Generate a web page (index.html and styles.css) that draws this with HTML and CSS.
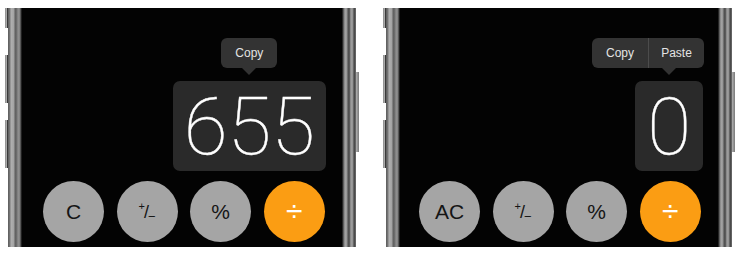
FILE: index.html
```html
<!DOCTYPE html>
<html>
<head>
<meta charset="utf-8">
<link rel="stylesheet" href="styles.css">
</head>
<body>
<div class="stage">
  <div class="phone phone-a">
    <span class="side side-l s1"></span>
    <span class="side side-l s2"></span>
    <span class="side side-l s3"></span>
    <span class="side side-r s4"></span>
    <div class="screen screen-a">
      <div class="display-row">
        <div class="display display-a">
          <div class="menu menu-a"><span class="menu-item">Copy</span></div>
          <span class="arrow"></span>
          <span class="value">655</span>
        </div>
      </div>
      <div class="keys">
        <div class="key gray">C</div>
        <div class="key gray"><span class="pm"><span class="pm-plus">+</span><span class="pm-slash">/</span><span class="pm-minus">−</span></span></div>
        <div class="key gray">%</div>
        <div class="key orange"><span class="div">÷</span></div>
      </div>
    </div>
  </div>
  <div class="phone phone-b">
    <span class="side side-l s1"></span>
    <span class="side side-l s2"></span>
    <span class="side side-l s3"></span>
    <span class="side side-r s4"></span>
    <div class="screen screen-b">
      <div class="display-row">
        <div class="display display-b">
          <div class="menu menu-b"><span class="menu-item">Copy</span><span class="menu-item sep">Paste</span></div>
          <span class="arrow"></span>
          <span class="value">0</span>
        </div>
      </div>
      <div class="keys">
        <div class="key gray">AC</div>
        <div class="key gray"><span class="pm"><span class="pm-plus">+</span><span class="pm-slash">/</span><span class="pm-minus">−</span></span></div>
        <div class="key gray">%</div>
        <div class="key orange"><span class="div">÷</span></div>
      </div>
    </div>
  </div>
</div>
</body>
</html>
```
FILE: styles.css
```css
* { box-sizing: border-box; }
html, body { margin: 0; padding: 0; background: #fff; }
body { width: 740px; height: 253px; overflow: hidden; }

.stage {
  display: flex;
  gap: 30px;
  padding: 8px 0 0 8px;
}

.phone {
  position: relative;
  height: 239px;
  padding: 0 14px;
  background:
    linear-gradient(to right,
      #5a5a5a 0, #7a7a7a 2px, #b0b0b0 3px, #a2a2a2 6px, #5e5e5e 7px, #707070 9px,
      #929292 10px, #808080 12px, #2e2e2e 13px, #111 14px,
      #111 calc(100% - 14px), #3a3a3a calc(100% - 13px), #828282 calc(100% - 12px),
      #acacac calc(100% - 10px), #5e5e5e calc(100% - 8px), #444 calc(100% - 7px),
      #a0a0a0 calc(100% - 5px), #909090 calc(100% - 3px), #3e3e3e calc(100% - 2px), #707070 100%);
}
.phone-a { width: 348px; }
.phone-b { width: 346px; }

.side {
  position: absolute;
  width: 3px;
  background: linear-gradient(to right, #8a8a8a, #b5b5b5);
}
.side-l { left: -3px; border-right: 1px solid #3a3a3a; }
.side-r { right: -3px; background: linear-gradient(to right, #b0b0b0, #7a7a7a); }
.s1 { top: 0; height: 20px; }
.s2 { top: 47px; height: 48px; }
.s3 { top: 112px; height: 48px; }
.s4 { top: 64px; height: 80px; }

.screen {
  height: 100%;
  background: #030303;
  display: flex;
  flex-direction: column;
  justify-content: flex-end;
  padding-bottom: 5px;
}
.screen-a { padding-left: 21px; padding-right: 16px; }
.screen-b { padding-left: 19px; padding-right: 15px; }

.display-row {
  display: flex;
  justify-content: flex-end;
  margin-bottom: 10px;
}

.display {
  position: relative;
  height: 90px;
  padding: 2px 11px 0;
  background: #2a2a2a;
  border-radius: 7px;
}
.display-b { padding: 2px 12px 0; }
.value {
  display: block;
  font-family: Roboto, "Liberation Sans", sans-serif;
  font-weight: 100;
  font-size: 80px;
  line-height: 88px;
  color: #fff;
  -webkit-text-stroke: 0.4px #fff;
}

.arrow {
  position: absolute;
  left: 50%;
  top: -13px;
  margin-left: -7px;
  width: 0;
  height: 0;
  border-left: 7px solid transparent;
  border-right: 7px solid transparent;
  border-top: 7px solid #333;
}

.menu {
  position: absolute;
  bottom: calc(100% + 13px);
  height: 30px;
  display: flex;
  background: #333;
  border-radius: 6px;
  font-family: "Liberation Sans", Arial, sans-serif;
  font-size: 12px;
  color: #e4e4e4;
}
.menu-a { left: 50%; transform: translateX(-50%); }
.menu-b { right: -1px; }
.menu-item {
  width: 56px;
  display: flex;
  align-items: center;
  justify-content: center;
}
.sep { border-left: 1px solid #4c4c4c; }

.keys {
  display: flex;
  gap: 12.6px;
}
.key {
  width: 61px;
  height: 61px;
  border-radius: 50%;
  display: flex;
  align-items: center;
  justify-content: center;
  font-family: "Liberation Sans", Arial, sans-serif;
  font-size: 21px;
}
.gray { background: #a5a5a5; color: #151515; }
.orange { background: #fb9d13; color: #fff; }
.div { font-size: 30px; line-height: 1; margin-top: -2px; }

.pm {
  display: inline-flex;
  align-items: flex-start;
  height: 20px;
  line-height: 1;
}
.pm-plus { font-size: 11px; margin-top: -1px; }
.pm-slash { font-size: 18px; margin-top: 1px; margin-left: -1px; }
.pm-minus { font-size: 13px; margin-top: 8px; margin-left: -1px; }
```
